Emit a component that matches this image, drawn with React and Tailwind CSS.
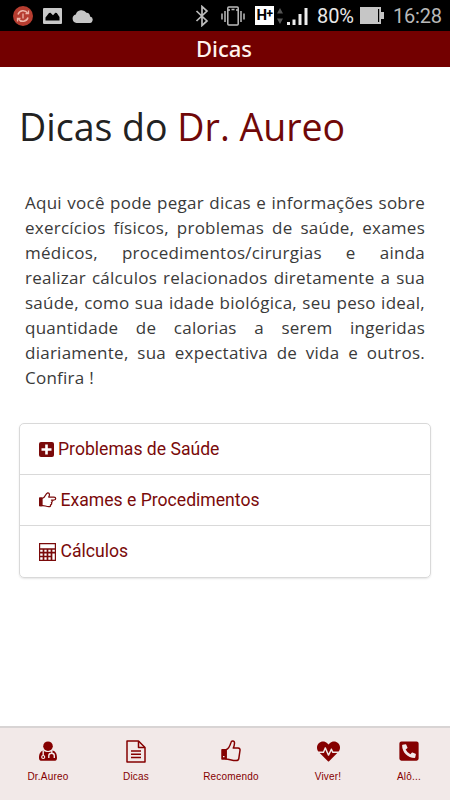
import { FaHeartbeat, FaPhoneSquareAlt } from "react-icons/fa";

function StatusBar() {
  return (
    <header className="flex h-[31px] shrink-0 items-center bg-black pl-[12px] text-[#c4c4c4]">
      <svg className="h-[22px] w-[22px] shrink-0" viewBox="0 0 22 22" fill="none">
        <circle cx="11" cy="11" r="10" fill="#b63d30" />
        <path d="M6 9.500A5.300 5.300 0 0 1 15.500 8M16 12.500A5.300 5.300 0 0 1 6.500 14" stroke="#eeb5a8" strokeWidth="1.500" />
        <path d="M16.500 5.500v3.200h-3M5.500 16.500v-3.200h3M11 8.500v5" stroke="#eeb5a8" strokeWidth="1.300" />
      </svg>
      <svg className="ml-[9px] h-[16px] w-[19px] shrink-0" viewBox="0 0 19 16">
        <rect width="19" height="16" rx="1" fill="#c9c9c9" />
        <path d="M2.500 12.500V9.500L6 5l1.500-.3L10 7.200l2.300-2.500 1.500.3 2.700 4v3.500z" fill="#000" />
      </svg>
      <svg className="ml-[10px] h-[14px] w-[21px] shrink-0" viewBox="0 0 21 14">
        <path d="M4.500 14a4.400 4.400 0 0 1-.7-8.600A6 6 0 0 1 14.500 3.800a4 4 0 0 1 3.600 3.700A3.300 3.300 0 0 1 17 14z" fill="#c6c6c6" />
      </svg>
      <svg className="ml-[102px] h-[22px] w-[14px] shrink-0" viewBox="0 0 14 22" fill="none" stroke="#bdbdbd" strokeWidth="1.700">
        <path d="M1.500 6l10.500 10-5 4.500v-19L12 6 1.500 16" />
      </svg>
      <svg className="ml-[12px] h-[20px] w-[24px] shrink-0" viewBox="0 0 24 20" fill="none" stroke="#bdbdbd" strokeWidth="1.500">
        <rect x="6.800" y="1" width="10.400" height="18" rx="1" />
        <path d="M7 4h2M10.500 3.500h3M15 4h2M4 5v11M1 7.500v6M20 5v11M23 7.500v6" />
      </svg>
      <div className="ml-[10px] flex h-[19px] w-[19px] shrink-0 items-center justify-center bg-white font-['Roboto',sans-serif] text-[15px] leading-none font-bold tracking-[-0.5px] text-black">
        H<span className="-mt-[3px] text-[12px]">+</span>
      </div>
      <svg className="ml-[3px] h-[16px] w-[6px] shrink-0" viewBox="0 0 6 16" fill="#555">
        <path d="M0 5.500L3 0l3 5.500zM0 10.500h6L3 16z" />
      </svg>
      <svg className="mt-[2px] ml-[4px] h-[19px] w-[21px] shrink-0" viewBox="0 0 21 19" fill="#eee">
        <path d="M0 15h3v3H0zM5.500 12.500h3V18h-3zM11.500 7h3v11h-3zM17.500 1h3v17h-3z" />
      </svg>
      <span className="ml-[9px] w-[39px] font-['Roboto',sans-serif] text-[20px] leading-none tracking-[-0.1px] text-[#e8e8e8]">80%</span>
      <svg className="ml-[4px] h-[17px] w-[24px] shrink-0" viewBox="0 0 24 17">
        <path d="M0 0h21v5h3v7h-3v5H0z" fill="#c6c6c6" />
        <path d="M18 2h1.200v13H18z" fill="#000" />
      </svg>
      <span className="ml-[9px] font-['Roboto',sans-serif] text-[20px] leading-none tracking-[-0.2px] text-[#b9b9b9]">16:28</span>
    </header>
  );
}

function PlusIcon() {
  return (
    <svg className="h-[15px] w-[15px]" viewBox="0 0 15 15">
      <rect width="15" height="15" rx="2" fill="currentColor" />
      <path d="M7.500 2.500v10M2.500 7.500h10" stroke="#fff" strokeWidth="2.600" />
    </svg>
  );
}

function HandIcon() {
  return (
    <svg className="h-[16px] w-[18px]" viewBox="0 0 18 16" fill="none" stroke="currentColor" strokeWidth="1.250" strokeLinejoin="round">
      <path d="M.7 6h3.300C6.300 5.300 6.300 1.500 8.700.9c2-.2 2.200 2 1 4.100H15c2.200 0 2.300 2.900 0 3h-2.600c1.200.6 1 2.200 0 2.600.7.900.2 2-.9 2.200.3 1.300-.3 1.900-1.600 1.900-2.700 0-4.100-1.200-6-1.200H.7z" />
      <path d="M.7 6H3v7.500H.7z" fill="currentColor" />
    </svg>
  );
}

function CalculatorIcon() {
  return (
    <svg className="h-[18px] w-[17px]" viewBox="0 0 17 18" fill="none" stroke="currentColor">
      <path d="M.6.600h15.800v16.800H.6z" strokeWidth="1.200" />
      <path d="M.6 6h15.800M1 9.700h15M1 13.500h12M4.500 6v11M8.500 6v11M12.500 6v11" strokeWidth="1.700" />
    </svg>
  );
}

function DoctorIcon() {
  return (
    <svg className="h-[20px] w-[18px]" viewBox="0 0 18 20">
      <circle cx="9" cy="5.200" r="4.800" fill="currentColor" />
      <path d="M4.200 9.500C1 10.500 0 13.500 0 17c0 2 1 2.800 3 2.800h12c2 0 3-.8 3-2.800 0-3.500-1-6.500-4.200-7.500-2.800 2-6.800 2-9.600 0z" fill="currentColor" />
      <path d="M4.200 9.500v5.300M12.800 9.700v2.500M9.800 17v-2.200c0-3.500 5.500-3.500 5.500 0V17" fill="none" stroke="#f2e9e8" strokeWidth="1.400" />
      <circle cx="4.200" cy="16" r="1.500" fill="none" stroke="#f2e9e8" strokeWidth="1.200" />
    </svg>
  );
}

function FileIcon() {
  return (
    <svg className="h-[23px] w-[20px]" viewBox="0 0 20 23" fill="none" stroke="currentColor" strokeWidth="1.500" strokeLinejoin="round">
      <path d="M1 1h11.500L19 7.500V22H1z" />
      <path d="M12.500 1v6.500H19M5 11h10M5 14.200h10M5 17.500h10" />
    </svg>
  );
}

function ThumbIcon() {
  return (
    <svg className="h-[22px] w-[20px]" viewBox="0 0 20 22" fill="none" stroke="currentColor" strokeWidth="1.500" strokeLinejoin="round">
      <path d="M5 9.800c2.500-.9 4-3.800 5-7.400.5-2 3.700-1.700 3.500.8-.1 1.900-.6 3.500-1.200 4.900h4.700c1.800 0 2.300 1.300 1.900 2.900l-1.100 7.600c-.3 1.500-1.200 2-2.700 2-3.700 0-6.500-1.300-10.100-1.700z" />
      <path d="M1 9.800h4v9.200H1z" fill="currentColor" />
      <path d="M2 16.700h1.500" stroke="#f2e9e8" strokeWidth="1.200" />
    </svg>
  );
}

const items = [
  { label: "Problemas de Saúde", icon: <PlusIcon />, gap: "gap-[4px]" },
  { label: "Exames e Procedimentos", icon: <HandIcon />, gap: "gap-[3.5px]" },
  { label: "Cálculos", icon: <CalculatorIcon />, gap: "gap-[4.5px]" },
];

const tabs = [
  { label: "Dr.Aureo", icon: <DoctorIcon />, width: "w-[96px]" },
  { label: "Dicas", icon: <FileIcon />, width: "w-[80px]" },
  { label: "Recomendo", icon: <ThumbIcon />, width: "w-[110px]" },
  { label: "Viver!", icon: <FaHeartbeat className="h-[23px] w-[23px]" />, width: "w-[84px]" },
  { label: "Alô...", icon: <FaPhoneSquareAlt className="h-[22px] w-[20px]" />, width: "w-[78px]" },
];

export default function App() {
  return (
    <div className="flex h-[800px] w-[450px] flex-col overflow-hidden bg-white">
      <StatusBar />
      <div className="flex h-[36px] shrink-0 items-center justify-center bg-[#730000] pr-[2px] pb-px font-['Noto_Sans',sans-serif] text-[22px] font-medium text-[#fff3ee]">
        Dicas
      </div>
      <main className="flex flex-1 flex-col px-[19px]">
        <h1 className="mt-[34px] font-['Open_Sans',sans-serif] text-[37.5px] leading-[52px] font-normal whitespace-nowrap text-[#222]">
          Dicas do <span className="text-[#700808]">Dr. Aureo</span>
        </h1>
        <p className="mt-[37px] ml-[6px] w-[400px] text-justify font-['Open_Sans',sans-serif] text-[17px] leading-[25px] tracking-[0.25px] text-[#3a3a3a]">
          Aqui você pode pegar dicas e informações sobre exercícios físicos, problemas de saúde, exames médicos, procedimentos/cirurgias e ainda realizar cálculos relacionados diretamente a sua saúde, como sua idade biológica, seu peso ideal, quantidade de calorias a serem ingeridas diariamente, sua expectativa de vida e outros. Confira !
        </p>
        <ul className="mt-[33px] w-[412px] divide-y divide-[#d9d9d9] rounded-[5px] border border-[#d9d9d9] shadow-[0_1px_2px_rgba(0,0,0,0.1)]">
          {items.map((item) => (
            <li key={item.label} className={`flex h-[51px] items-center pl-[19px] font-['Roboto',sans-serif] text-[17.6px] text-[#7a0a0a] ${item.gap}`}>
              {item.icon}
              <span>{item.label}</span>
            </li>
          ))}
        </ul>
      </main>
      <nav className="flex h-[74px] shrink-0 border-t-2 border-[#d8d4d4] bg-[#f2e9e8] text-[#850000]">
        {tabs.map((tab) => (
          <div key={tab.label} className={`flex shrink-0 flex-col items-center ${tab.width}`}>
            <div className="mt-[11px] flex h-[24px] items-center">{tab.icon}</div>
            <span className="mt-[6px] font-['Liberation_Sans',sans-serif] text-[10px] leading-[16px] tracking-[0.2px]">{tab.label}</span>
          </div>
        ))}
      </nav>
    </div>
  );
}
